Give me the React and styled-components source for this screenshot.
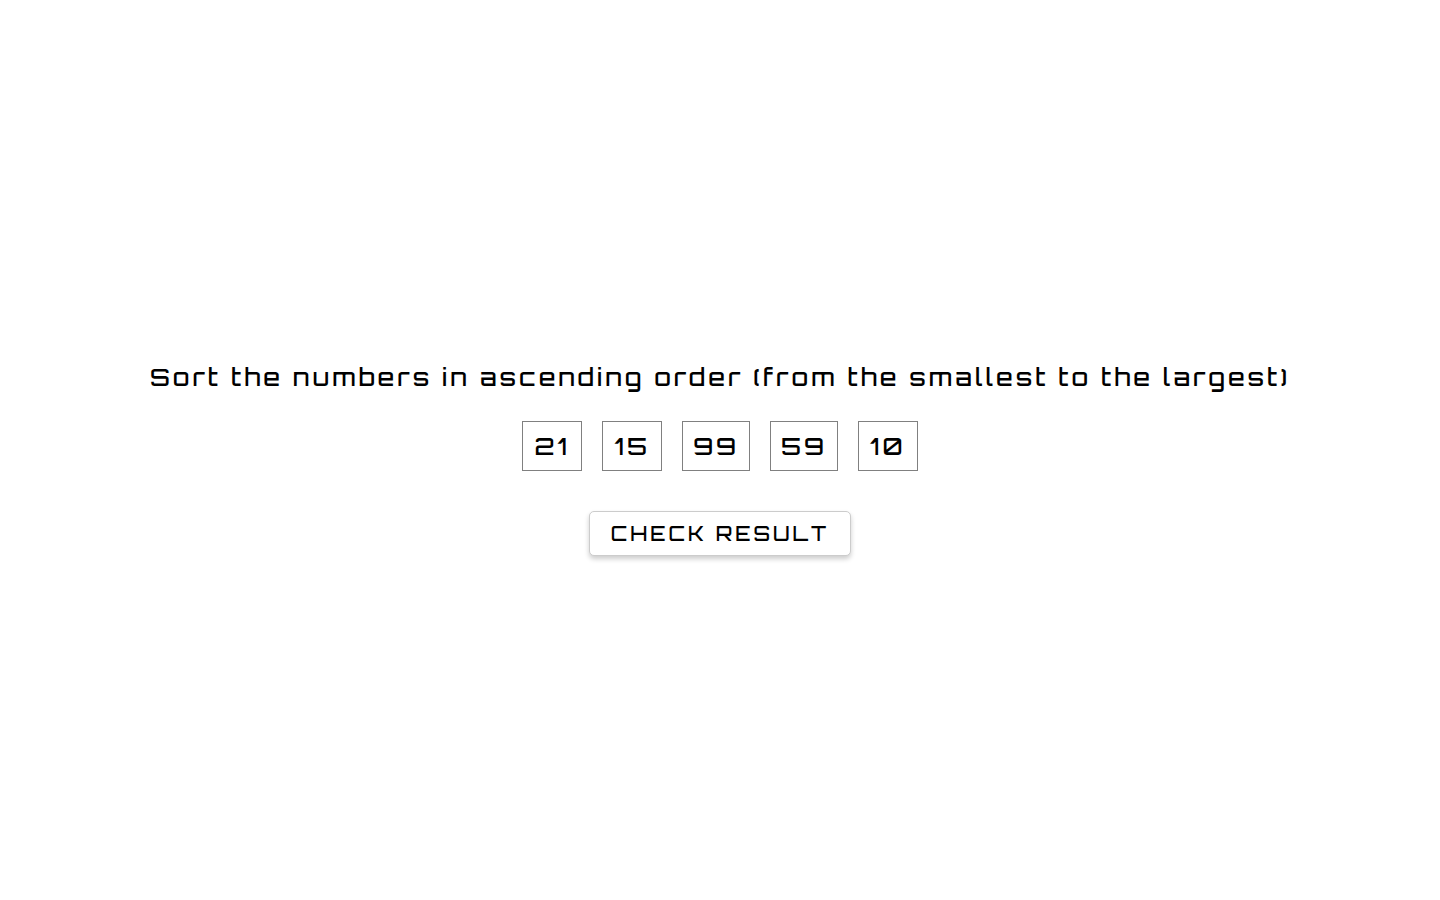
import React, { useState } from "react";
import styled, { createGlobalStyle } from "styled-components";

const GlobalStyle = createGlobalStyle`
  body {
    margin: 0;
    background: #fff;
    color: #000;
    font-family: Orbitron, "DejaVu Sans", Verdana, sans-serif;
    font-weight: 500;
    font-kerning: none;
    letter-spacing: 3px;
  }
`;

const Page = styled.main`
  display: flex;
  flex-direction: column;
  align-items: center;
  justify-content: center;
  min-height: 100vh;
  padding: 36px 20px 20px;
  box-sizing: border-box;
`;

const Task = styled.h1`
  margin: 0 0 28px;
  font-size: 24px;
  font-weight: 500;
  line-height: 32px;
  text-align: center;
`;

const Numbers = styled.ul`
  display: flex;
  flex-wrap: wrap;
  justify-content: center;
  gap: 20px;
  margin: 0 0 40px;
  padding: 0;
  list-style: none;
`;

const NumberTile = styled.li`
  box-sizing: border-box;
  min-width: 60px;
  padding: 10px;
  border: 1px solid #808080;
  font-size: 24px;
  line-height: 28px;
  text-align: center;
  cursor: grab;
`;

const CheckButton = styled.button`
  min-width: 262px;
  padding: 8px 20px;
  border: 1px solid #ccc;
  border-radius: 5px;
  background: #fff;
  color: inherit;
  font: inherit;
  font-size: 20px;
  line-height: 27px;
  letter-spacing: inherit;
  text-transform: uppercase;
  white-space: nowrap;
  box-shadow: 0 3px 5px rgba(0, 0, 0, 0.2);
  cursor: pointer;
`;

export default function App() {
  const [numbers] = useState([21, 15, 99, 59, 10]);
  return (
    <>
      <GlobalStyle />
      <Page>
        <Task>Sort the numbers in ascending order (from the smallest to the largest)</Task>
        <Numbers>
          {numbers.map((value) => (
            <NumberTile key={value} draggable>
              {value}
            </NumberTile>
          ))}
        </Numbers>
        <CheckButton type="button">Check result</CheckButton>
      </Page>
    </>
  );
}
